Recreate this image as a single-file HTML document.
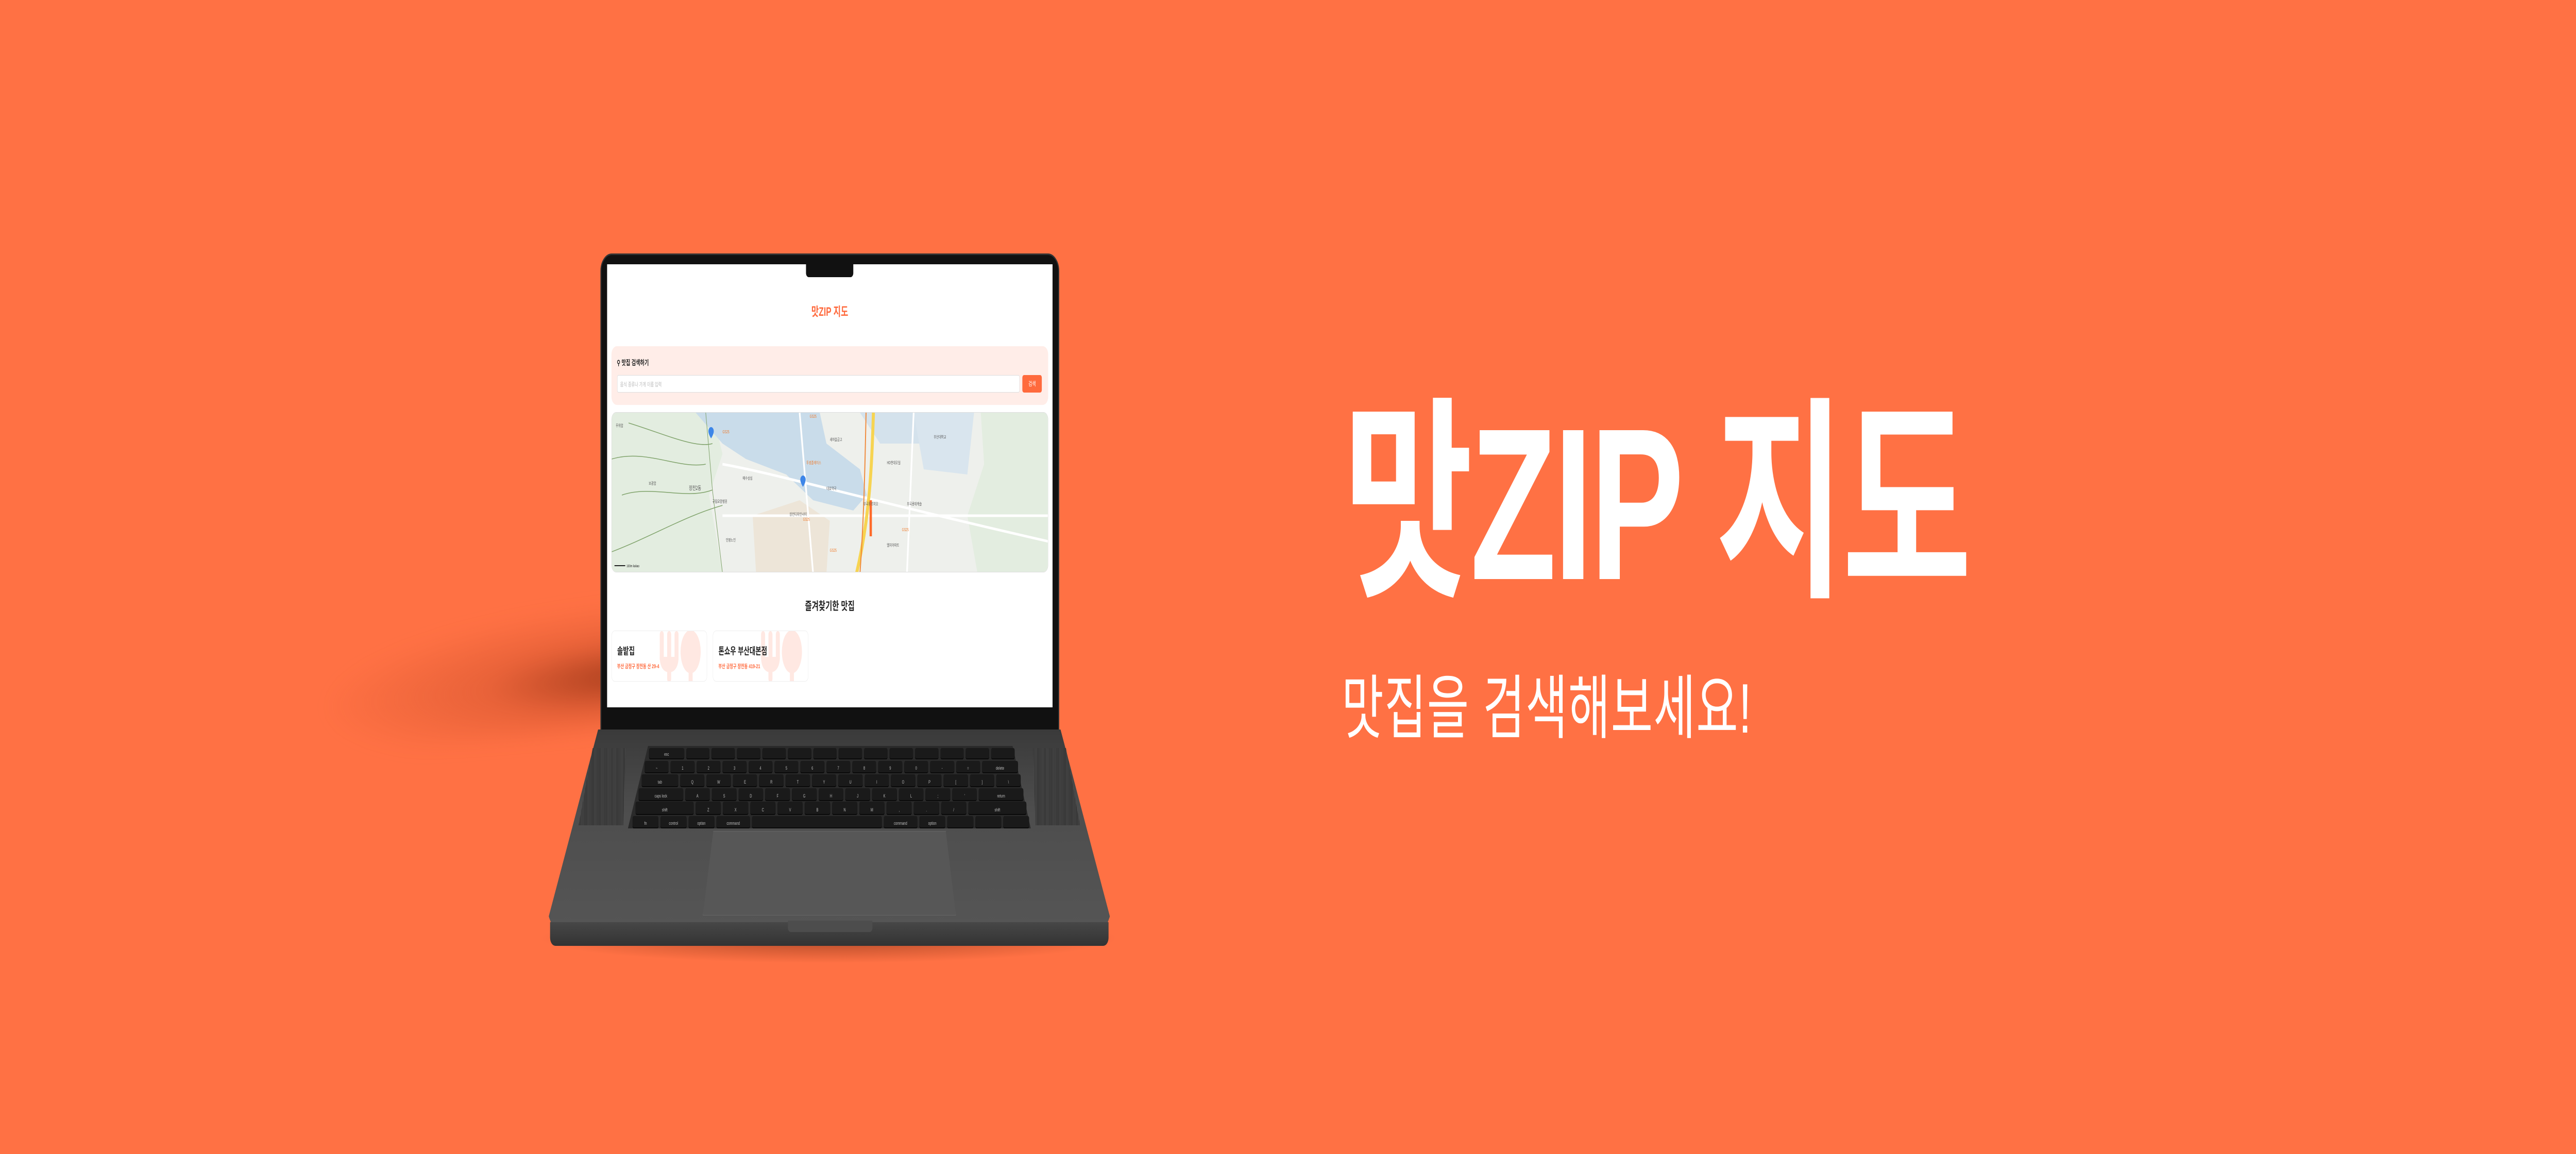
<!DOCTYPE html>
<html><head><meta charset="utf-8"><style>
*{margin:0;padding:0;box-sizing:border-box}
html,body{width:100%;height:100%;overflow:hidden;background:#FF7144}
#w{width:7680px;height:2240px;background:#FF7144;position:absolute;left:0;top:0;overflow:hidden;transform-origin:0 0;font-family:"Liberation Sans","Noto Sans CJK KR",sans-serif}
.abs{position:absolute}
.shadow{left:950px;top:1120px;width:900px;height:320px;background:radial-gradient(ellipse 100% 45% at 100% 70%,rgba(140,45,15,.75),rgba(190,70,35,.35) 45%,rgba(255,113,68,0) 100%);transform:rotate(-4deg);filter:blur(20px)}
.shadow2{left:1600px;top:1800px;width:1740px;height:70px;background:radial-gradient(ellipse at 50% 30%,rgba(80,25,5,.45),rgba(255,113,68,0) 70%)}
.title{left:4005px;top:700px;font-size:420px;font-weight:bold;color:#fff;letter-spacing:-8px;white-space:nowrap;line-height:560px}
.sub{left:4000px;top:1290px;font-size:136px;color:#fff;white-space:nowrap;line-height:170px;letter-spacing:2px}
.lid{left:1790px;top:492px;width:1368px;height:930px;background:#111;border-radius:34px 34px 0 0;border:3px solid #333}
.screen{left:1810px;top:513px;width:1328px;height:860px;background:#fff;overflow:hidden}
.notch{left:593px;top:0;width:141px;height:25px;background:#111;border-radius:0 0 8px 8px}
.base{left:1636px;top:1416px;width:1673px;height:378px;background:linear-gradient(#3a3a3a,#4d4d4d 40%,#555);clip-path:polygon(8.8% 0,91.2% 0,100% 96%,99.5% 100%,0.5% 100%,0 96%);border-radius:8px}
.lip{left:1640px;top:1790px;width:1665px;height:46px;background:linear-gradient(#474747,#333);border-radius:0 0 16px 16px}
.lipn{left:2349px;top:1787px;width:252px;height:22px;background:#4d4d4d;border-radius:0 0 8px 8px}
.kb{left:1872px;top:1448px;width:1201px;height:160px;background:#2a2a2a;clip-path:polygon(5% 0,95.5% 0,100% 100%,0 100%)}
.tp{left:2095px;top:1613px;width:755px;height:164px;background:#575757;clip-path:polygon(4.2% 0,96% 0,100% 100%,0 100%);border:1px solid #666}
.spk{background:repeating-linear-gradient(90deg,#333 0 2px,#474747 2px 4px)}
.row{position:absolute;display:flex;gap:6px}
.k{background:#1a1a1a;border-radius:4px;height:100%;color:#bbb;font-size:9px;display:flex;align-items:flex-end;justify-content:center;padding-bottom:3px;box-shadow:0 2px 0 #0a0a0a}
</style></head><body>
<div id="w">
<div class="abs shadow"></div>
<div class="abs shadow2"></div>
<div class="abs title">맛ZIP 지도</div>
<div class="abs sub">맛집을 검색해보세요!</div>

<div class="abs lid"></div>
<div class="abs screen">
  <div class="abs notch"></div>
  <div class="abs" style="left:0;width:1328px;top:72px;text-align:center;color:#FF6A3D;font-size:24px;font-weight:bold">맛ZIP 지도</div>
  <div class="abs" style="left:13px;top:159px;width:1302px;height:114px;background:#FFEDE8;border-radius:16px">
    <div class="abs" style="left:16px;top:22px;font-size:14px;font-weight:bold;color:#222">&#9906; 맛집 검색하기</div>
    <div class="abs" style="left:17px;top:56px;width:1200px;height:34px;background:#fff;border:1px solid #ddd;border-radius:4px;font-size:11px;color:#bbb;padding:9px 8px">음식 종류나 가게 이름 입력</div>
    <div class="abs" style="left:1225px;top:56px;width:58px;height:34px;background:#FF6A3D;border-radius:5px;color:#fff;font-size:12px;text-align:center;line-height:34px">검색</div>
  </div>
  <div class="abs" style="left:13px;top:287px;width:1302px;height:311px;border-radius:14px;overflow:hidden;border:1px solid #ddd">
    <svg width="1302" height="311" viewBox="0 0 1302 311">
      <rect width="1302" height="311" fill="#EEF0EC"/>
      <path d="M0 0H300L330 80 290 160 330 311H0Z" fill="#E3EDE0"/>
      <path d="M1100 0H1302V311H1090L1060 200 1110 100Z" fill="#E3EDE0"/>
      <path d="M250 0H620L640 60 740 110 760 160 720 190 600 170 520 120 400 90 330 60Z" fill="#C9DCEA"/>
      <path d="M740 0H960V60H800Z" fill="#D4E2EC"/>
      <path d="M420 200 560 170 650 210 640 311H430Z" fill="#EDE5D8"/>
      <path d="M900 0H1080L1060 120 930 110Z" fill="#D9E5EE"/>
      <g fill="none" stroke="#7FA26A" stroke-width="1.5">
        <path d="M0 90C100 70 200 110 280 100"/><path d="M30 160C120 140 220 170 300 150"/><path d="M0 270C120 240 220 200 330 180"/><path d="M280 0L300 150 330 311"/><path d="M50 20C150 40 250 70 300 60"/>
      </g>
      <g fill="none" stroke="#fff" stroke-width="5"><path d="M330 100C500 120 700 160 1302 250"/><path d="M560 0L600 311"/><path d="M900 0L880 311"/><path d="M330 200H1302"/></g>
      <path d="M780 0C775 100 770 200 730 311" stroke="#F7D451" stroke-width="9" fill="none"/>
      <path d="M758 0C755 100 752 200 740 311" stroke="#F08A3C" stroke-width="3" fill="none"/>
      <path d="M772 170V240" stroke="#FF6A2A" stroke-width="7"/>
      <g font-size="8" fill="#555" font-family="Noto Sans CJK KR,sans-serif">
        <text x="12" y="28">무위암</text><text x="110" y="140">보광암</text><text x="230" y="150" font-size="11">장전2동</text><text x="300" y="175">규림요양병원</text><text x="390" y="130">예수성심</text><text x="530" y="200">장전디자인시티</text><text x="650" y="55">새마을금고</text><text x="750" y="180">부곡푸르지오</text><text x="820" y="100">HD현대오일</text><text x="960" y="50">부산대학교</text><text x="340" y="250">인평노인</text><text x="820" y="260">엘지아파트</text><text x="640" y="150">대호약국</text><text x="880" y="180">부곡롯데캐슬</text>
      </g>
      <g font-size="8" fill="#F07A2A"><text x="330" y="40">GS25</text><text x="590" y="10">GS25</text><text x="570" y="210">GS25</text><text x="650" y="270">GS25</text><text x="865" y="230">GS25</text><text x="580" y="100">투썸플레이스</text></g>
      <g fill="#3D86E8"><path d="M288 36a8 8 0 0 1 16 0c0 6-8 14-8 14s-8-8-8-14z"/><path d="M562 130a8 8 0 0 1 16 0c0 6-8 14-8 14s-8-8-8-14z"/></g>
      <path d="M8 297H40" stroke="#222" stroke-width="2"/><text x="44" y="300" font-size="7" fill="#222">100m kakao</text>
    </svg>
  </div>
  <div class="abs" style="left:0;width:1328px;top:646px;text-align:center;font-size:22px;font-weight:bold;color:#222">즐겨찾기한 맛집</div>
  <div class="abs" style="left:13px;top:711px;width:285px;height:99px;border:1px solid #eee;border-radius:10px;overflow:hidden;background:#fff">
    <svg class="abs" style="left:140px;top:0" width="140" height="99"><g fill="#FFE8E2"><rect x="3" y="0" width="12" height="60" rx="6"/><rect x="25" y="0" width="12" height="99" rx="6"/><rect x="47" y="0" width="12" height="60" rx="6"/><path d="M3 50h56c0 20-12 30-28 30s-28-10-28-30z"/><ellipse cx="95" cy="40" rx="30" ry="42"/><rect x="89" y="60" width="12" height="40"/></g></svg>
    <div class="abs" style="left:16px;top:24px;font-size:19px;font-weight:bold;color:#222">솔밭집</div>
    <div class="abs" style="left:16px;top:60px;font-size:11px;font-weight:bold;color:#FF6A3D">부산 금정구 장전동 산 29-4</div>
  </div>
  <div class="abs" style="left:315px;top:711px;width:285px;height:99px;border:1px solid #eee;border-radius:10px;overflow:hidden;background:#fff">
    <svg class="abs" style="left:140px;top:0" width="140" height="99"><g fill="#FFE8E2"><rect x="3" y="0" width="12" height="60" rx="6"/><rect x="25" y="0" width="12" height="99" rx="6"/><rect x="47" y="0" width="12" height="60" rx="6"/><path d="M3 50h56c0 20-12 30-28 30s-28-10-28-30z"/><ellipse cx="95" cy="40" rx="30" ry="42"/><rect x="89" y="60" width="12" height="40"/></g></svg>
    <div class="abs" style="left:16px;top:24px;font-size:19px;font-weight:bold;color:#222">톤쇼우 부산대본점</div>
    <div class="abs" style="left:16px;top:60px;font-size:11px;font-weight:bold;color:#FF6A3D">부산 금정구 장전동 419-21</div>
  </div>
</div>

<div class="abs base"></div>
<div class="abs spk" style="left:1725px;top:1452px;width:140px;height:150px;clip-path:polygon(30% 0,100% 0,95% 100%,0 100%)"></div>
<div class="abs spk" style="left:3080px;top:1452px;width:140px;height:150px;clip-path:polygon(0 0,70% 0,100% 100%,5% 100%)"></div>
<div class="abs kb"></div>
<div class="row" style="left:1935px;top:1452px;width:1090px;height:20px"><div class="k" style="flex:1.5">esc</div><div class="k" style="flex:1"></div><div class="k" style="flex:1"></div><div class="k" style="flex:1"></div><div class="k" style="flex:1"></div><div class="k" style="flex:1"></div><div class="k" style="flex:1"></div><div class="k" style="flex:1"></div><div class="k" style="flex:1"></div><div class="k" style="flex:1"></div><div class="k" style="flex:1"></div><div class="k" style="flex:1"></div><div class="k" style="flex:1"></div><div class="k" style="flex:1"></div></div>
<div class="row" style="left:1922px;top:1477px;width:1113px;height:22px"><div class="k" style="flex:1">~</div><div class="k" style="flex:1">1</div><div class="k" style="flex:1">2</div><div class="k" style="flex:1">3</div><div class="k" style="flex:1">4</div><div class="k" style="flex:1">5</div><div class="k" style="flex:1">6</div><div class="k" style="flex:1">7</div><div class="k" style="flex:1">8</div><div class="k" style="flex:1">9</div><div class="k" style="flex:1">0</div><div class="k" style="flex:1">-</div><div class="k" style="flex:1">=</div><div class="k" style="flex:1.5">delete</div></div>
<div class="row" style="left:1913px;top:1503px;width:1130px;height:23px"><div class="k" style="flex:1.5">tab</div><div class="k" style="flex:1">Q</div><div class="k" style="flex:1">W</div><div class="k" style="flex:1">E</div><div class="k" style="flex:1">R</div><div class="k" style="flex:1">T</div><div class="k" style="flex:1">Y</div><div class="k" style="flex:1">U</div><div class="k" style="flex:1">I</div><div class="k" style="flex:1">O</div><div class="k" style="flex:1">P</div><div class="k" style="flex:1">[</div><div class="k" style="flex:1">]</div><div class="k" style="flex:1">\</div></div>
<div class="row" style="left:1904px;top:1530px;width:1147px;height:23px"><div class="k" style="flex:1.8">caps lock</div><div class="k" style="flex:1">A</div><div class="k" style="flex:1">S</div><div class="k" style="flex:1">D</div><div class="k" style="flex:1">F</div><div class="k" style="flex:1">G</div><div class="k" style="flex:1">H</div><div class="k" style="flex:1">J</div><div class="k" style="flex:1">K</div><div class="k" style="flex:1">L</div><div class="k" style="flex:1">;</div><div class="k" style="flex:1">'</div><div class="k" style="flex:1.8">return</div></div>
<div class="row" style="left:1895px;top:1556px;width:1165px;height:24px"><div class="k" style="flex:2.3">shift</div><div class="k" style="flex:1">Z</div><div class="k" style="flex:1">X</div><div class="k" style="flex:1">C</div><div class="k" style="flex:1">V</div><div class="k" style="flex:1">B</div><div class="k" style="flex:1">N</div><div class="k" style="flex:1">M</div><div class="k" style="flex:1">,</div><div class="k" style="flex:1">.</div><div class="k" style="flex:1">/</div><div class="k" style="flex:2.3">shift</div></div>
<div class="row" style="left:1886px;top:1584px;width:1182px;height:22px"><div class="k" style="flex:1">fn</div><div class="k" style="flex:1">control</div><div class="k" style="flex:1">option</div><div class="k" style="flex:1.3">command</div><div class="k" style="flex:5"></div><div class="k" style="flex:1.3">command</div><div class="k" style="flex:1">option</div><div class="k" style="flex:1"></div><div class="k" style="flex:1"></div><div class="k" style="flex:1"></div></div>
<div class="abs tp"></div>
<div class="abs lip"></div>
<div class="abs lipn"></div>
</div>
<script>
(function(){var w=document.getElementById('w');function f(){var sx=window.innerWidth/7680,sy=window.innerHeight/2240;if(Math.abs(sx-1)>0.001||Math.abs(sy-1)>0.001){w.style.transform='scale('+sx+','+sy+')';}else{w.style.transform='none';}}f();window.addEventListener('resize',f);})();
</script>
</body></html>
